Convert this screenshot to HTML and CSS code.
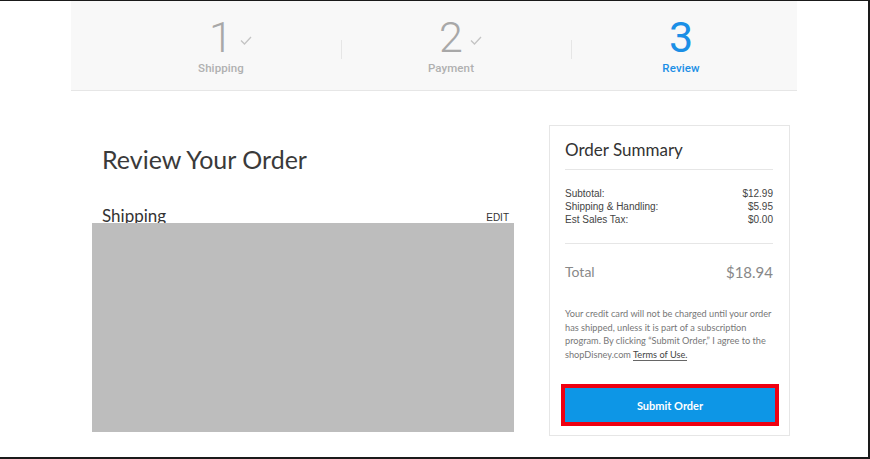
FILE: index.html
```html
<!DOCTYPE html>
<html lang="en">
<head>
    <meta charset="UTF-8">
    <meta name="viewport" content="width=device-width, initial-scale=1.0">
    <title>Review Your Order</title>
    <link rel="stylesheet" href="styles.css">
</head>
<body>

<div class="page">
    <div class="steps">
        <div class="step done">
            <div class="step-num">1
                <svg class="check" viewBox="0 0 12 9" width="12" height="9"><polyline points="1,4.5 4.5,8 11,1" fill="none" stroke="#c4c4c4" stroke-width="1.3"/></svg>
            </div>
            <div class="step-label">Shipping</div>
        </div>
        <div class="step done">
            <div class="step-num">2
                <svg class="check" viewBox="0 0 12 9" width="12" height="9"><polyline points="1,4.5 4.5,8 11,1" fill="none" stroke="#c4c4c4" stroke-width="1.3"/></svg>
            </div>
            <div class="step-label">Payment</div>
        </div>
        <div class="step active">
            <div class="step-num">3</div>
            <div class="step-label">Review</div>
        </div>
    </div>

    <div class="content">
        <div class="review">
            <h1>Review Your Order</h1>
            <div class="section-head">
                <h2>Shipping</h2>
                <a href="#" class="edit">EDIT</a>
            </div>
            <div class="redacted"></div>
        </div>

        <div class="summary">
            <h3>Order Summary</h3>
            <div class="lines">
                <div class="line"><span>Subtotal:</span><span>$12.99</span></div>
                <div class="line"><span>Shipping &amp; Handling:</span><span>$5.95</span></div>
                <div class="line"><span>Est Sales Tax:</span><span>$0.00</span></div>
            </div>
            <div class="total"><span>Total</span><span class="total-amt">$18.94</span></div>
            <p class="note">Your credit card will not be charged until your order has shipped, unless it is part of a subscription program. By clicking “Submit Order,” I agree to the shopDisney.com <a href="#">Terms of Use.</a></p>
            <button class="submit">Submit Order</button>
        </div>
    </div>
</div>

</body>
</html>
```

FILE: styles.css
```css
* {
    box-sizing: border-box;
}

html, body {
    margin: 0;
    padding: 0;
}

body {
    height: 459px;
    background-color: #fff;
    border-top: 1px solid #1a1a1a;
    border-right: 2px solid #1a1a1a;
    border-bottom: 2px solid #1a1a1a;
    font-family: 'Lato', 'Noto Sans', sans-serif;
    color: #333;
    overflow: hidden;
}

.page {
    width: 726px;
    margin: 0 auto;
}

/* progress steps */
.steps {
    display: flex;
    height: 90px;
    padding-left: 35px;
    background-color: #f8f8f8;
    border-bottom: 1px solid #e6e6e6;
}

.step {
    position: relative;
    width: 230px;
    text-align: center;
    padding-top: 14px;
    color: #a8a8a8;
}

.step + .step::before {
    content: '';
    position: absolute;
    left: 5px;
    top: 39px;
    width: 1px;
    height: 19px;
    background-color: #e6e6e6;
}

.step-num {
    position: relative;
    display: inline-block;
    font-family: 'Roboto', sans-serif;
    font-weight: 300;
    font-size: 43px;
    line-height: 44px;
}

.check {
    position: absolute;
    left: calc(100% + 7px);
    top: 21px;
}

.step-label {
    font-family: 'Roboto', sans-serif;
    font-size: 11.5px;
    font-weight: 500;
    margin-top: 2px;
    letter-spacing: 0.1px;
}

.step.done .step-label {
    color: #b0b0b0;
}

.step.active {
    color: #1b8fe6;
}

.step.active .step-num {
    font-weight: 400;
}

/* main */
.content {
    display: flex;
    gap: 35px;
    padding: 34px 7px 0 21px;
}

.review {
    width: 422px;
    padding-top: 19px;
}

h1 {
    margin: 0 0 0 10px;
    font-size: 25px;
    font-weight: 400;
    line-height: 30px;
    color: #3a3a3a;
}

.section-head {
    display: flex;
    justify-content: space-between;
    align-items: flex-end;
    height: 18px;
    margin-top: 31px;
    padding: 0 5px 0 10px;
    overflow: hidden;
}

h2 {
    margin: 0;
    font-size: 17px;
    font-weight: 400;
    line-height: 22px;
    align-self: flex-start;
}

.edit {
    font-family: 'Liberation Sans', sans-serif;
    font-size: 10px;
    color: #333;
    text-decoration: none;
    line-height: 11px;
}

.redacted {
    height: 209px;
    background-color: #bdbdbd;
}

/* order summary */
.summary {
    width: 241px;
    height: 311px;
    border: 1px solid #e6e6e6;
    padding: 12px 16px 10px 15px;
}

h3 {
    margin: 0;
    font-size: 17px;
    font-weight: 400;
    line-height: 24px;
    padding-bottom: 7px;
    border-bottom: 1px solid #e6e6e6;
}

.lines {
    padding: 17px 0 17px;
    border-bottom: 1px solid #e6e6e6;
}

.line, .total {
    display: flex;
    justify-content: space-between;
}

.line {
    font-family: 'Liberation Sans', sans-serif;
    font-size: 10px;
    line-height: 13px;
    color: #444;
}

.total {
    margin-top: 18px;
    font-size: 14px;
    line-height: 20px;
    color: #888;
}

.total-amt {
    font-size: 15px;
}

.note {
    margin: 25px 0 0;
    font-size: 9.2px;
    line-height: 13.5px;
    color: #777;
}

.note a {
    color: #444;
    text-decoration: none;
    border-bottom: 1px solid #666;
}

.submit {
    display: block;
    width: 218px;
    height: 42px;
    margin: 23px 0 0 -4px;
    background-color: #0d96e6;
    border: 4px solid #ee0010;
    color: #fff;
    font-family: 'Lato', sans-serif;
    font-weight: 700;
    font-size: 11px;
    cursor: pointer;
}
```
